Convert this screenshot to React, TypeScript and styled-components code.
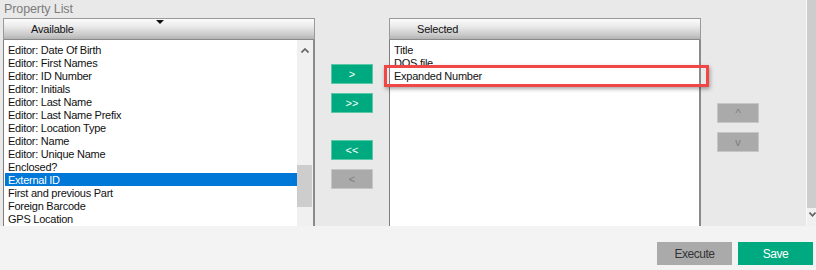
import React from "react";
import styled, { createGlobalStyle } from "styled-components";

const GlobalStyle = createGlobalStyle`
  html, body { margin: 0; padding: 0; }
  body {
    width: 816px;
    height: 270px;
    overflow: hidden;
    background: #f3f3f3;
    font-family: "Liberation Sans", Arial, sans-serif;
  }
`;

const Page = styled.div`
  width: 816px;
  height: 270px;
  display: flex;
  flex-direction: column;
`;

const Main = styled.div`
  height: 226px;
  background: #e9e9e9;
  display: flex;
  flex-direction: row;
`;

const Column = styled.div<{ $width: number; $left?: number }>`
  width: ${(p) => p.$width}px;
  margin-left: ${(p) => p.$left ?? 0}px;
  display: flex;
  flex-direction: column;
  padding-top: 18px;
  position: relative;
`;

const SectionLabel = styled.div`
  position: absolute;
  top: 2px;
  left: 1px;
  height: 16px;
  line-height: 14px;
  font-size: 12.5px;
  letter-spacing: -0.1px;
  color: #7c7c7c;
`;

const ListPanel = styled.div`
  flex: 1;
  display: flex;
  flex-direction: column;
  position: relative;
  min-height: 0;
`;

const PanelHeader = styled.div`
  height: 22px;
  box-sizing: border-box;
  border: 1px solid #9a9a9a;
  border-bottom-color: #8a8a8a;
  background: linear-gradient(#fbfbfb 0%, #ececec 35%, #c9c9c9 80%, #b3b3b3 100%);
  display: flex;
  align-items: center;
  padding-left: 27px;
  font-size: 11px;
  letter-spacing: -0.2px;
  color: #111;
  position: relative;
`;

const SortArrow = styled.svg`
  position: absolute;
  top: 1px;
  left: 152px;
`;

const ListBody = styled.div`
  flex: 1;
  background: #fff;
  border-left: 1px solid #7f7f7f;
  border-right: 2px solid #8a8a8a;
  display: flex;
  flex-direction: row;
  min-height: 0;
  overflow: hidden;
`;

const Items = styled.div`
  flex: 1;
  padding: 3px 0 0 1px;
  display: flex;
  flex-direction: column;
`;

const Item = styled.div<{ $selected?: boolean }>`
  height: 13px;
  box-sizing: border-box;
  padding: 1px 0 0 3px;
  line-height: 13px;
  font-size: 11px;
  letter-spacing: -0.25px;
  white-space: nowrap;
  overflow: visible;
  color: ${(p) => (p.$selected ? "#fff" : "#111")};
  background: ${(p) => (p.$selected ? "#0078d7" : "transparent")};
`;

const ScrollTrack = styled.div`
  width: 16px;
  background: #f0f0f0;
  display: flex;
  flex-direction: column;
  align-items: stretch;
  padding-top: 8px;
`;

const ScrollArrow = styled.svg`
  align-self: center;
`;

const ScrollThumb = styled.div<{ $top: number; $height: number }>`
  margin-top: ${(p) => p.$top}px;
  height: ${(p) => p.$height}px;
  width: 15px;
  background: #cdcdcd;
`;

const Highlight = styled.div`
  position: absolute;
  left: -5px;
  top: 47px;
  width: 325px;
  height: 22px;
  box-sizing: border-box;
  border: 3px solid #f04646;
  box-shadow: 1px 2px 4px rgba(0, 0, 0, 0.35);
  pointer-events: none;
`;

const ActionColumn = styled.div<{ $width: number; $top: number }>`
  width: ${(p) => p.$width}px;
  padding-top: ${(p) => p.$top}px;
  padding-left: 16px;
  box-sizing: border-box;
  display: flex;
  flex-direction: column;
  gap: 27px;
`;

const ButtonGroup = styled.div`
  display: flex;
  flex-direction: column;
  gap: 9px;
`;

const ActionButton = styled.button<{ $enabled?: boolean }>`
  width: 42px;
  height: 20px;
  box-sizing: border-box;
  margin: 0;
  padding: 0;
  border: 1px solid ${(p) => (p.$enabled ? "#5cc9a6" : "#c6c6c6")};
  background: ${(p) => (p.$enabled ? "#00aa80" : "#aaaaaa")};
  color: ${(p) => (p.$enabled ? "#ffffff" : "#7d7d7d")};
  font-family: "Liberation Sans", Arial, sans-serif;
  font-size: 11px;
  line-height: 16px;
  cursor: pointer;
`;

const PageScroll = styled.div`
  width: 10px;
  border-left: 1px solid #fafafa;
  box-sizing: border-box;
  display: flex;
  flex-direction: column;
  background: #f0f0f0;
`;

const PageScrollThumb = styled.div`
  height: 208px;
  background: #cdcdcd;
`;

const PageScrollArrow = styled.svg`
  margin: 4px 0 0 2px;
`;

const Footer = styled.div`
  flex: 1;
  background: #f3f3f3;
  display: flex;
  justify-content: flex-end;
  align-items: flex-start;
  padding: 16px 3px 0 0;
  gap: 6px;
`;

const FooterButton = styled.button<{ $primary?: boolean }>`
  width: 75px;
  height: 23px;
  margin: 0;
  border: none;
  background: ${(p) => (p.$primary ? "#00aa80" : "#aaaaaa")};
  color: ${(p) => (p.$primary ? "#ffffff" : "#333333")};
  font-family: "Liberation Sans", Arial, sans-serif;
  font-size: 12px;
  letter-spacing: -0.5px;
  cursor: pointer;
`;

const available = [
  "Editor: Date Of Birth",
  "Editor: First Names",
  "Editor: ID Number",
  "Editor: Initials",
  "Editor: Last Name",
  "Editor: Last Name Prefix",
  "Editor: Location Type",
  "Editor: Name",
  "Editor: Unique Name",
  "Enclosed?",
  "External ID",
  "First and previous Part",
  "Foreign Barcode",
  "GPS Location",
];

const selected = ["Title", "DOS file", "Expanded Number"];

export default function App() {
  return (
    <>
      <GlobalStyle />
      <Page>
        <Main>
          <Column $width={312} $left={3}>
            <SectionLabel>Property List</SectionLabel>
            <ListPanel>
              <PanelHeader>
                Available
                <SortArrow width="8" height="5" viewBox="0 0 8 5">
                  <polygon points="0,0 8,0 4,4" fill="#111" />
                </SortArrow>
              </PanelHeader>
              <ListBody>
                <Items>
                  {available.map((t) => (
                    <Item key={t} $selected={t === "External ID"}>
                      {t}
                    </Item>
                  ))}
                </Items>
                <ScrollTrack>
                  <ScrollArrow width="8" height="5" viewBox="0 0 8 5">
                    <polyline points="0.5,4.5 4,1 7.5,4.5" fill="none" stroke="#606060" strokeWidth="1.6" />
                  </ScrollArrow>
                  <ScrollThumb $top={112} $height={42} />
                </ScrollTrack>
              </ListBody>
            </ListPanel>
          </Column>
          <ActionColumn $width={74} $top={64}>
            <ButtonGroup>
              <ActionButton $enabled>&gt;</ActionButton>
              <ActionButton $enabled>&gt;&gt;</ActionButton>
            </ButtonGroup>
            <ButtonGroup>
              <ActionButton $enabled>&lt;&lt;</ActionButton>
              <ActionButton>&lt;</ActionButton>
            </ButtonGroup>
          </ActionColumn>
          <Column $width={312}>
            <ListPanel>
              <PanelHeader>Selected</PanelHeader>
              <ListBody>
                <Items>
                  {selected.map((t) => (
                    <Item key={t}>{t}</Item>
                  ))}
                </Items>
              </ListBody>
              <Highlight />
            </ListPanel>
          </Column>
          <ActionColumn $width={105} $top={103}>
            <ButtonGroup>
              <ActionButton>^</ActionButton>
              <ActionButton>v</ActionButton>
            </ButtonGroup>
          </ActionColumn>
          <PageScroll>
            <PageScrollThumb />
            <PageScrollArrow width="7" height="5" viewBox="0 0 7 5">
              <polyline points="0.5,0.5 3.5,3.8 6.5,0.5" fill="none" stroke="#606060" strokeWidth="1.6" />
            </PageScrollArrow>
          </PageScroll>
        </Main>
        <Footer>
          <FooterButton>Execute</FooterButton>
          <FooterButton $primary>Save</FooterButton>
        </Footer>
      </Page>
    </>
  );
}
